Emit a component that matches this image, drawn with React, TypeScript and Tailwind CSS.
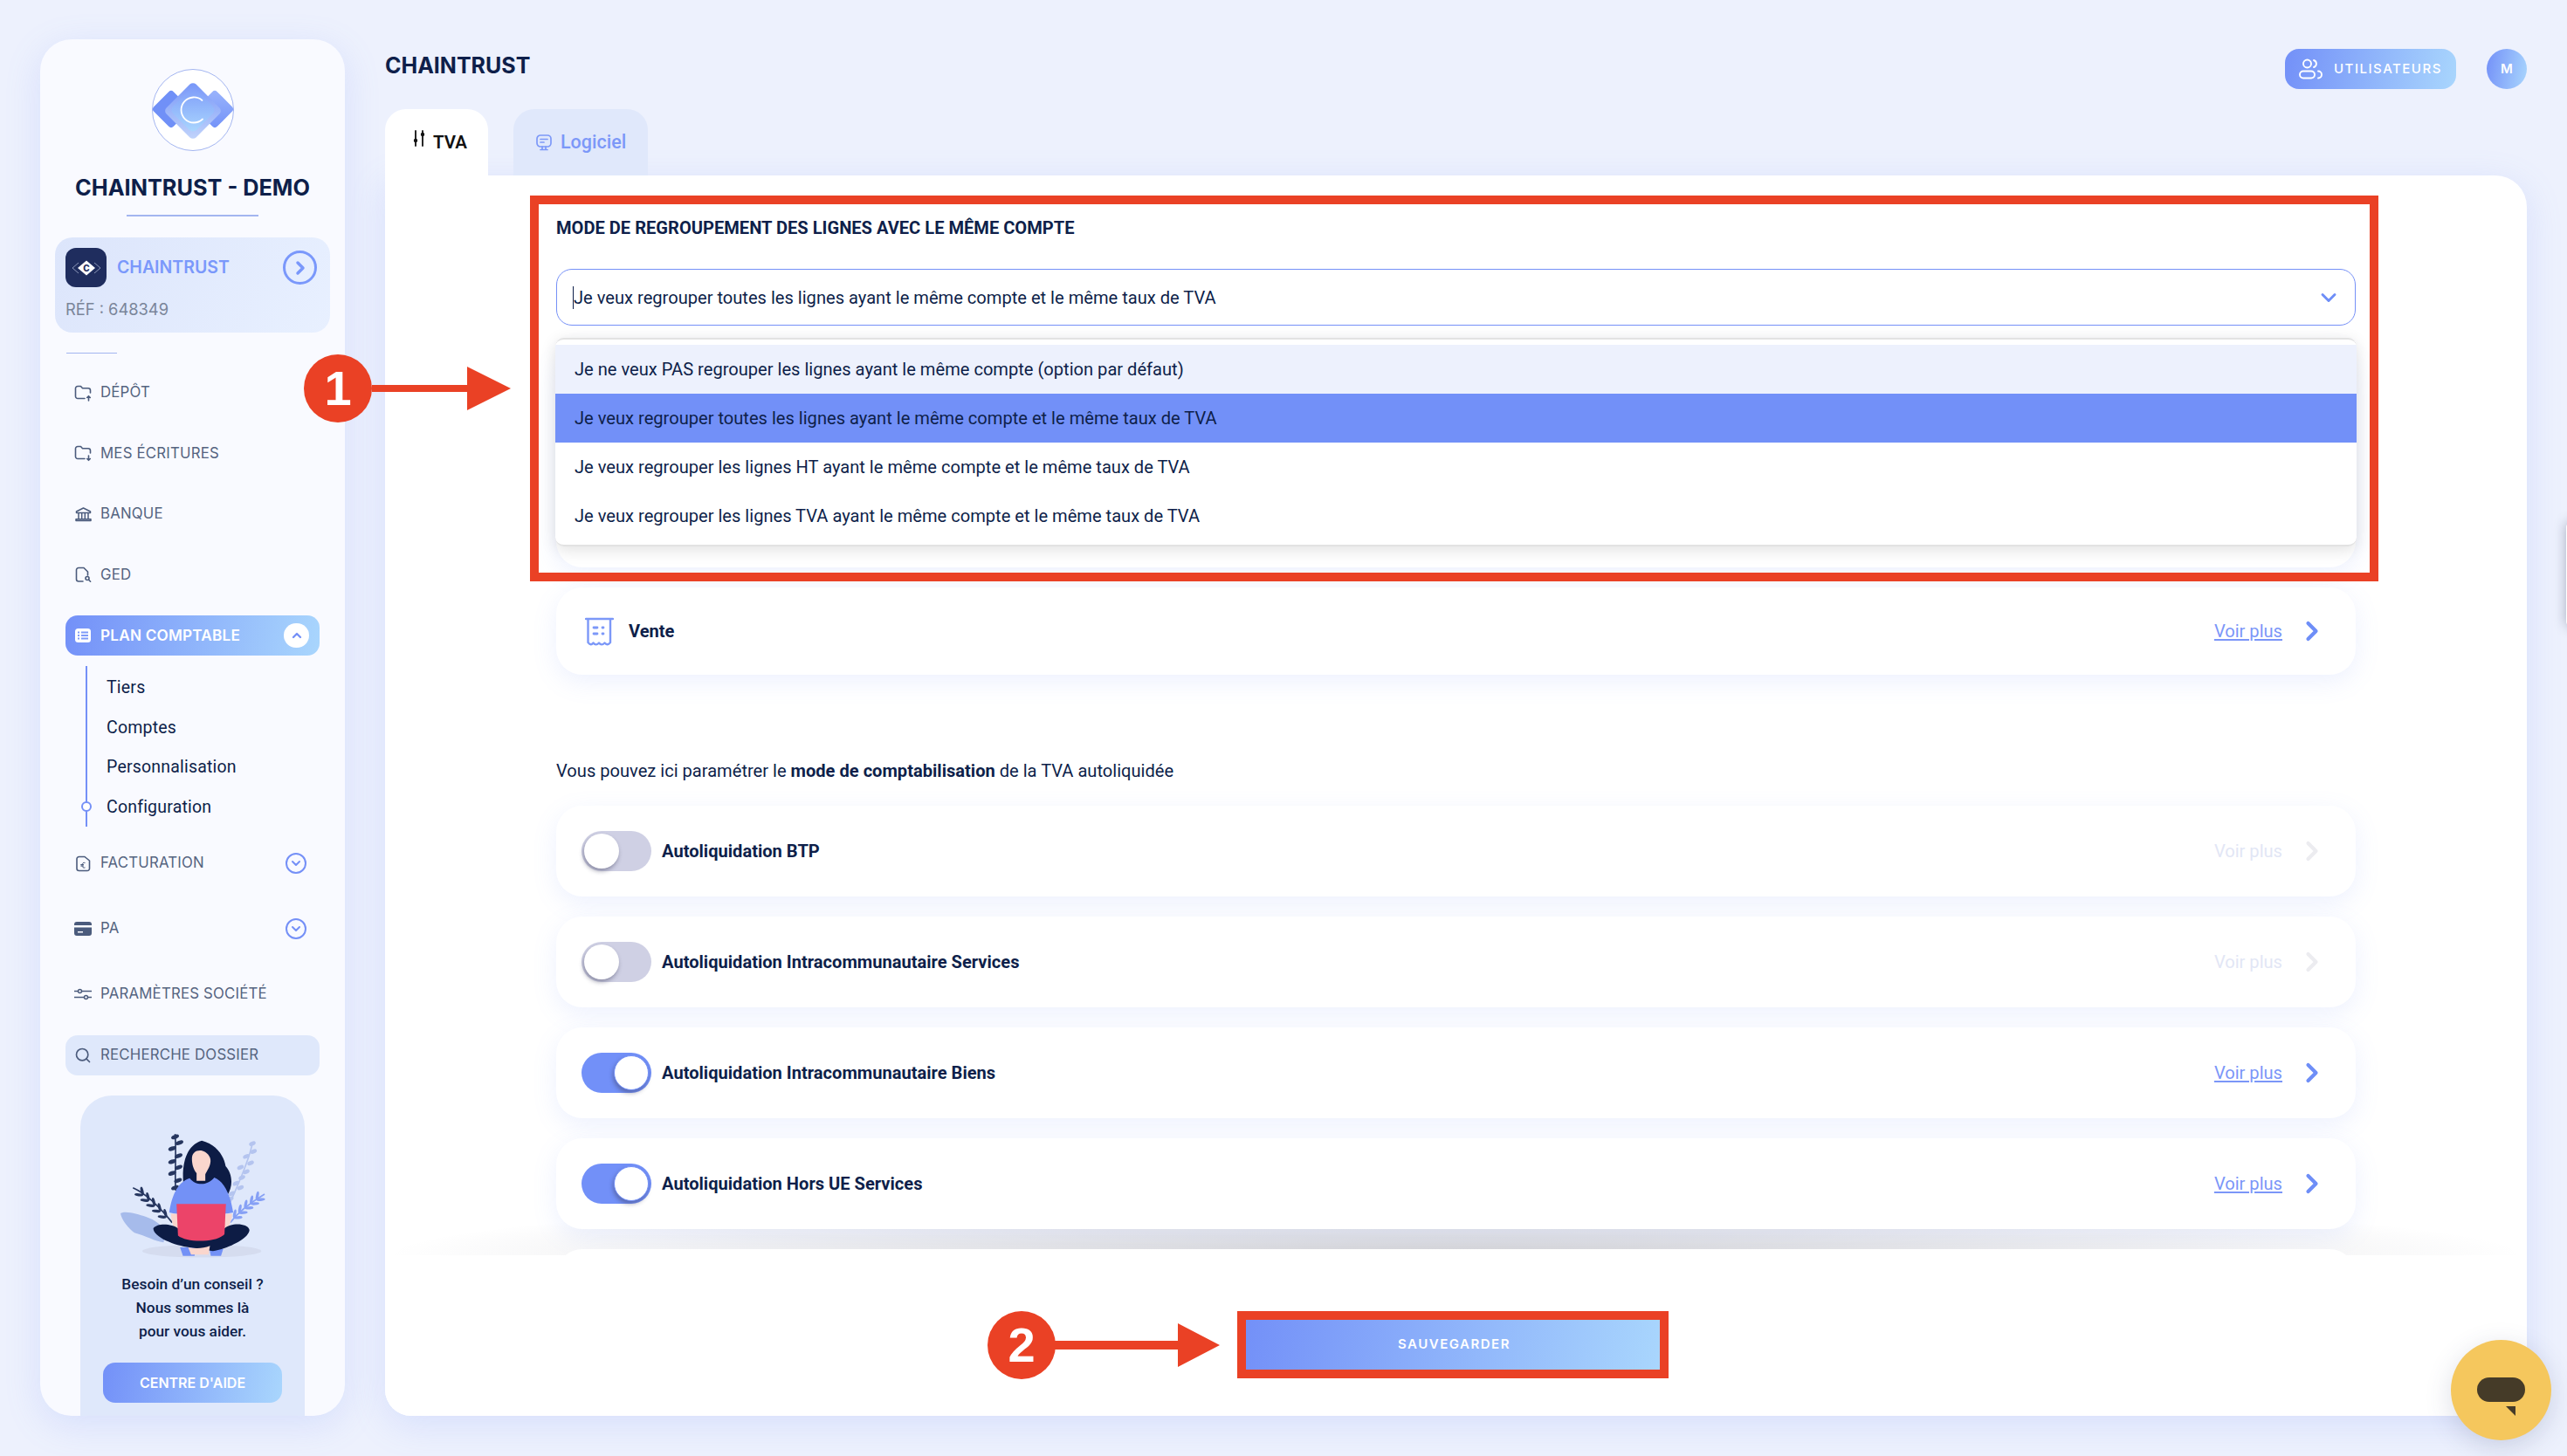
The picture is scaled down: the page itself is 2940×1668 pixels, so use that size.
import { ChevronDown, ChevronRight, ChevronUp, Search } from "lucide-react"
import type { ReactNode } from "react"

const gradient = "bg-[linear-gradient(100deg,#7390f8,#a9d6fd)]"
const inter = "font-[Inter,sans-serif]"

function FolderIcon({ dir }: { dir: "up" | "down" }) {
  return (
    <svg width="20" height="19" viewBox="0 0 20 19" fill="none" stroke="#4b5b7c" strokeWidth="1.6" strokeLinecap="round" strokeLinejoin="round">
      <path d="M12 15.5H4a2.5 2.5 0 0 1-2.500-2.500V4A2.500 2.500 0 0 1 4 1.500h3.500l2 2.200H16A2.500 2.500 0 0 1 18.500 6.200V9" />
      {dir === "up" ? <path d="M16.500 18v-5M14.700 14.500l1.800-1.800 1.800 1.800" /> : <path d="M16.500 12v5M14.700 15.500l1.800 1.800 1.800-1.800" />}
    </svg>
  )
}

function BankIcon() {
  return (
    <svg width="19" height="17" viewBox="0 0 19 17" fill="none" stroke="#4b5b7c" strokeWidth="1.500" strokeLinejoin="round">
      <path d="M1.500 5 9.500 1l8 4v1.500h-16zM1 15.500h17v-1.800H1zM4 7v6M7.700 7v6M11.300 7v6M15 7v6" />
    </svg>
  )
}

function GedIcon() {
  return (
    <svg width="19" height="19" viewBox="0 0 19 19" fill="none" stroke="#4b5b7c" strokeWidth="1.600" strokeLinecap="round" strokeLinejoin="round">
      <path d="M9 17H4a2.500 2.500 0 0 1-2.500-2.500V4A2.500 2.500 0 0 1 4 1.500h6l4.500 4.500v4" />
      <circle cx="14" cy="13.500" r="2" />
      <path d="m15.600 15.200 2 2" />
    </svg>
  )
}

function PlanIcon() {
  return (
    <svg width="18" height="16" viewBox="0 0 18 16">
      <rect width="18" height="16" rx="3.500" fill="#fff" />
      <g fill="#7f9bf9">
        <rect x="3" y="3.500" width="2" height="2" />
        <rect x="3" y="7" width="2" height="2" />
        <rect x="3" y="10.500" width="2" height="2" />
        <rect x="7" y="3.500" width="8" height="2" />
        <rect x="7" y="7" width="8" height="2" />
        <rect x="7" y="10.500" width="8" height="2" />
      </g>
    </svg>
  )
}

function InvoiceIcon() {
  return (
    <svg width="17" height="19" viewBox="0 0 17 19" fill="none" stroke="#4b5b7c" strokeWidth="1.600" strokeLinejoin="round">
      <path d="M3.500 1.500h6.500l5.500 4.500v9A2.500 2.500 0 0 1 13 17.500H3.500A2.500 2.500 0 0 1 1 15V4a2.500 2.500 0 0 1 2.500-2.500z" />
      <path d="M10.500 8.500c-2-.8-3.500.5-3.500 2.700s1.500 3.500 3.500 2.700M5.300 10.500h3.700M5.300 12h3.700" strokeWidth="1" />
    </svg>
  )
}

function CardIcon() {
  return (
    <svg width="20" height="16" viewBox="0 0 20 16">
      <path d="M0 3a3 3 0 0 1 3-3h14a3 3 0 0 1 3 3v1H0zM0 6.500h20V13a3 3 0 0 1-3 3H3a3 3 0 0 1-3-3zm4 4.500v1.500h6V11z" fill="#4b5b7c" fillRule="evenodd" />
    </svg>
  )
}

function SlidersIcon() {
  return (
    <svg width="20" height="14" viewBox="0 0 20 14" fill="none" stroke="#4b5b7c" strokeWidth="1.500">
      <path d="M0 3.500h4.500M8.500 3.500H20M0 10.500h11.500M15.500 10.500H20" />
      <circle cx="6.500" cy="3.500" r="2" />
      <circle cx="13.500" cy="10.500" r="2" />
    </svg>
  )
}

function Logo() {
  return (
    <svg width="94" height="94" viewBox="0 0 94 94">
      <defs>
        <linearGradient id="logoRight" x1="0" y1="0" x2="1" y2="1">
          <stop offset="0" stopColor="#9ab4fc" />
          <stop offset="1" stopColor="#7392f8" />
        </linearGradient>
        <linearGradient id="logoTop" x1="0" y1="0" x2="1" y2="1">
          <stop offset="0" stopColor="#7595f8" />
          <stop offset="1" stopColor="#c3d5fb" />
        </linearGradient>
        <linearGradient id="logoMid" x1="0" y1="0" x2="1" y2="1">
          <stop offset="0" stopColor="#7e9cf9" />
          <stop offset="1" stopColor="#abd8fe" />
        </linearGradient>
      </defs>
      <circle cx="47" cy="47" r="46.500" fill="#fff" stroke="#a3b5f0" strokeWidth="1" />
      <rect x="6" y="30" width="32" height="32" rx="4" fill="#7090f7" transform="rotate(45 22 46)" />
      <rect x="56" y="30" width="32" height="32" rx="4" fill="url(#logoRight)" transform="rotate(45 72 46)" />
      <rect x="23" y="24" width="48" height="48" rx="5" fill="url(#logoTop)" transform="rotate(45 47 48)" />
      <rect x="28" y="28" width="38" height="38" rx="6" fill="url(#logoMid)" transform="rotate(45 47 47)" />
      <path d="M57.500 36a14.500 14.500 0 1 0 .5 21.500" fill="none" stroke="#fff" strokeWidth="1.800" strokeLinecap="round" />
    </svg>
  )
}

function CompanyMark() {
  return (
    <div className="flex h-[45px] w-[47px] shrink-0 items-center justify-center rounded-[12px] bg-[#1f2d5e]">
      <svg width="36" height="24" viewBox="0 0 36 24">
        <path d="M9 6 2 12l7 6M27 6l7 6-7 6" fill="none" stroke="#8b96b8" strokeWidth="1" />
        <path d="M18 3.500 28 12l-10 8.500L8 12z" fill="#fff" />
        <text x="18" y="15.500" textAnchor="middle" fontSize="10" fontWeight="800" fill="#1f2d5e" fontFamily="Inter, sans-serif">C</text>
      </svg>
    </div>
  )
}

const leavesDark = [
  [600, 365], [615, 385], [590, 405], [612, 430], [590, 450], [612, 470], [590, 490], [610, 515], [600, 540],
]
const leavesLight = [
  [866, 388], [870, 415], [845, 432], [860, 455], [825, 470], [845, 485], [830, 505], [810, 525], [825, 540], [795, 560], [790, 578],
]
const leavesLeft = [
  [490, 566], [510, 585], [530, 603], [550, 622], [570, 642],
]
const leavesBlue = [
  [880, 582], [860, 596], [840, 611], [820, 627], [802, 644],
]

function Illustration() {
  return (
    <svg className="shrink-0" width="173" height="150" viewBox="400 340 520 450">
      <ellipse cx="692" cy="758" rx="205" ry="22" fill="#d5dcef" />
      <path d="M412 628c18-10 58 2 88 12 30 10 60 30 70 60l-10 28c-30-3-60-23-100-33-20-15-45-45-48-67z" fill="#a6bbeb" />

      <path d="M866 388C850 460 820 520 790 590" fill="none" stroke="#b4c4ef" strokeWidth="5" />
      {leavesLight.map(([x, y]) => (
        <ellipse key={`${x}-${y}`} cx={x} cy={y} rx="12" ry="7" fill="#b4c4ef" transform={`rotate(-25 ${x} ${y})`} />
      ))}
      <path d="M908 562C870 585 820 620 790 660" fill="none" stroke="#86a0f5" strokeWidth="5" />
      {leavesBlue.map(([x, y]) => (
        <g key={`${x}-${y}`} fill="#86a0f5">
          <ellipse cx={x + 15} cy={y} rx="15" ry="5" transform={`rotate(-78 ${x} ${y})`} />
          <ellipse cx={x + 15} cy={y} rx="15" ry="5" transform={`rotate(-5 ${x} ${y})`} />
        </g>
      ))}
      <path d="M600 355C605 420 598 490 602 550" fill="none" stroke="#26365f" strokeWidth="5" />
      {leavesDark.map(([x, y]) => (
        <ellipse key={`${x}-${y}`} cx={x} cy={y} rx="14" ry="7" fill="#26365f" transform={`rotate(-20 ${x} ${y})`} />
      ))}
      <path d="M455 540C500 560 550 610 590 660" fill="none" stroke="#26365f" strokeWidth="5" />
      {leavesLeft.map(([x, y]) => (
        <g key={`${x}-${y}`} fill="#26365f">
          <ellipse cx={x - 15} cy={y} rx="15" ry="5" transform={`rotate(6 ${x} ${y})`} />
          <ellipse cx={x - 15} cy={y} rx="15" ry="5" transform={`rotate(76 ${x} ${y})`} />
        </g>
      ))}

      <path d="M628 520c-4-60 8-125 64-142 48 12 76 50 82 88 22 24 28 66 6 100z" fill="#0d1c45" />
      <path d="M658 440c0-20 14-30 32-28 20 4 34 22 32 38-2 20-14 34-18 44v22h-30v-26c-10-12-16-30-16-50z" fill="#fad6cd" />
      <path d="M580 625c8-55 28-105 70-118 20 26 60 28 85-2 36 14 56 64 65 120l-20 4-180 1z" fill="#7391f6" />
      <path d="M586 630h20l12 50-16 10c-10-18-16-40-16-60zM776 630h20c0 20-8 40-18 54l-12-8z" fill="#fad6cd" />
      <path d="M617 745h55l-5 30h-40zM718 750h48l-8 25h-35z" fill="#7391f6" />
      <path d="M525 680c15-20 65-15 85 0h160c20-20 80-20 86 5-1 30-76 65-126 73l-80-13c-50-5-125-35-125-65z" fill="#0d1c45" />
      <path d="M645 745c25 5 50 5 75-5l-5 30h-60z" fill="#fad6cd" />
      <path d="M605 596h170l-5 104c-30 30-130 30-160 5z" fill="#ec4469" />
    </svg>
  )
}

function CircleChevron({ up }: { up?: boolean }) {
  return (
    <span className="flex h-[24px] w-[24px] items-center justify-center rounded-full border-2 border-[#7590f7]">
      {up ? <ChevronUp className="h-4 w-4 text-[#7590f7]" strokeWidth={3} /> : <ChevronDown className="h-4 w-4 text-[#7590f7]" strokeWidth={3} />}
    </span>
  )
}

function NavItem({ icon, label, trailing }: { icon: ReactNode; label: string; trailing?: ReactNode }) {
  return (
    <div className="flex h-[46px] shrink-0 items-center pl-[10px] pr-[15px]">
      <span className="flex w-[20px] justify-center">{icon}</span>
      <span className={`ml-[10px] flex-1 text-[16.800px] tracking-[0.2px] text-[#55647f] ${inter}`}>{label}</span>
      {trailing}
    </div>
  )
}

function Sidebar() {
  return (
    <aside className="mt-[45px] ml-[46px] flex h-[1577px] w-[349px] shrink-0 flex-col overflow-hidden rounded-[36px] bg-[#f9faff] shadow-[0_10px_40px_rgba(116,144,248,0.18)]">
      <div className="mt-[34px] flex shrink-0 justify-center">
        <Logo />
      </div>
      <h1 className={`mt-[23px] shrink-0 text-center text-[25.300px] leading-[38px] font-bold text-[#0e1f4a] ${inter}`}>CHAINTRUST - DEMO</h1>
      <div className="mx-auto mt-[12px] h-[2px] w-[151px] shrink-0 bg-[#a3b5f0]" />
      <div className="mx-[17px] mt-[24px] h-[109px] shrink-0 rounded-[20px] bg-[linear-gradient(120deg,#dce5fb,#e8f0ff)] px-[12px] pt-[12px]">
        <div className="flex items-center">
          <CompanyMark />
          <span className={`ml-[12px] flex-1 text-[19.500px] font-semibold text-[#7a98fb] ${inter}`}>CHAINTRUST</span>
          <span className="mr-[3px] flex h-[39px] w-[39px] items-center justify-center rounded-full border-[3px] border-[#7a98fb]">
            <ChevronRight className="h-6 w-6 text-[#7a98fb]" strokeWidth={3.500} />
          </span>
        </div>
        <div className={`mt-[12px] text-[18.300px] leading-[26px] text-[#7a8599] ${inter}`}>RÉF : 648349</div>
      </div>
      <div className="mt-[23px] ml-[30px] h-px w-[58px] shrink-0 bg-[#a3b5f0]" />

      <nav className="mt-[22px] flex shrink-0 flex-col px-[29px]">
        <div className="flex flex-col gap-[23.500px]">
          <NavItem icon={<FolderIcon dir="up" />} label="DÉPÔT" />
          <NavItem icon={<FolderIcon dir="down" />} label="MES ÉCRITURES" />
          <NavItem icon={<BankIcon />} label="BANQUE" />
          <NavItem icon={<GedIcon />} label="GED" />
          <div className={`flex h-[46px] items-center rounded-[14px] pl-[10px] pr-[12px] ${gradient}`}>
            <span className="flex w-[20px] justify-center">
              <PlanIcon />
            </span>
            <span className={`ml-[10px] flex-1 text-[17.200px] font-semibold tracking-[0.2px] text-white ${inter}`}>PLAN COMPTABLE</span>
            <span className="flex h-[28px] w-[29px] items-center justify-center rounded-full bg-white">
              <ChevronUp className="h-4 w-4 text-[#7590f7]" strokeWidth={3.500} />
            </span>
          </div>
        </div>

        <div className="relative mt-[12px] h-[184px] pt-[2px] pl-[47px] text-[19.500px] tracking-[0.2px] text-[#0e1f4a]">
          <div className="absolute top-0 left-[23px] h-full w-[1.500px] bg-[#7590f7]" />
          <div className="absolute top-[155px] left-[18px] h-[12px] w-[12px] rounded-full border-2 border-[#7590f7] bg-white" />
          {["Tiers", "Comptes", "Personnalisation", "Configuration"].map((name) => (
            <div key={name} className="flex h-[45.500px] items-center">
              {name}
            </div>
          ))}
        </div>

        <div className="mt-[19px] flex flex-col gap-[29px]">
          <NavItem icon={<InvoiceIcon />} label="FACTURATION" trailing={<CircleChevron />} />
          <NavItem icon={<CardIcon />} label="PA" trailing={<CircleChevron />} />
          <NavItem icon={<SlidersIcon />} label="PARAMÈTRES SOCIÉTÉ" />
        </div>

        <div className="mt-[24px] flex h-[46px] items-center rounded-[14px] bg-[#dfe8fb] pl-[10px]">
          <span className="flex w-[20px] justify-center">
            <Search className="h-5 w-5 text-[#4b5b7c]" strokeWidth={2} />
          </span>
          <span className={`ml-[10px] text-[16.800px] tracking-[0.2px] text-[#55647f] ${inter}`}>RECHERCHE DOSSIER</span>
        </div>
      </nav>

      <div className="mx-[46px] mt-[23px] flex h-[400px] shrink-0 flex-col items-center rounded-t-[36px] bg-[#dfe8fb] pt-[39px]">
        <Illustration />
        <div className="mt-[14px] text-center text-[17.300px] leading-[27px] font-medium text-[#0e1f4a]">
          <p>Besoin d’un conseil ?</p>
          <p>Nous sommes là</p>
          <p>pour vous aider.</p>
        </div>
        <button className={`mt-[22px] h-[46px] w-[205px] shrink-0 rounded-[14px] text-[16px] font-semibold text-white ${gradient} ${inter}`}>CENTRE D'AIDE</button>
      </div>
    </aside>
  )
}

function VoirPlus({ disabled }: { disabled?: boolean }) {
  return (
    <div className="flex items-center">
      <span className={disabled ? "text-[20.100px] text-[#e2e6f5]" : "text-[20.100px] text-[#7b96f8] underline underline-offset-2"}>Voir plus</span>
      <ChevronRight className={disabled ? "ml-[16px] h-[36px] w-[36px] text-[#ececf0]" : "ml-[16px] h-[36px] w-[36px] text-[#6e8ef7]"} strokeWidth={2.800} />
    </div>
  )
}

function Toggle({ on }: { on?: boolean }) {
  return (
    <span className={on ? "relative block h-[46px] w-[80px] rounded-full bg-[#7290f8]" : "relative block h-[46px] w-[80px] rounded-full bg-[#cfd0e4]"}>
      <span
        className={
          on
            ? "absolute top-[3px] right-[3px] h-[40px] w-[40px] rounded-full border border-[#7290f8] bg-white shadow-[-1px_3px_5px_rgba(60,60,90,0.45)]"
            : "absolute top-[3px] left-[3px] h-[40px] w-[40px] rounded-full bg-white shadow-[-1px_3px_5px_rgba(60,60,90,0.45)]"
        }
      />
    </span>
  )
}

const cardShadow = "shadow-[0_8px_28px_rgba(116,144,248,0.13)]"

function ToggleCard({ label, on }: { label: string; on?: boolean }) {
  return (
    <div className={`relative z-10 flex h-[104px] shrink-0 items-center justify-between rounded-[30px] bg-white pr-[32px] pl-[29px] ${cardShadow}`}>
      <div className="flex items-center">
        <Toggle on={on} />
        <span className="ml-[12px] text-[20.100px] font-bold text-[#0e1f4a]">{label}</span>
      </div>
      <VoirPlus disabled={!on} />
    </div>
  )
}

function ReceiptIcon() {
  return (
    <svg width="33" height="33" viewBox="0 0 33 33" fill="none" stroke="#7c98f8" strokeWidth="2.400" strokeLinecap="round" strokeLinejoin="round">
      <path d="M1 2h31M3.500 2v27c2.500 3 4 3 6 .5 2 2.500 4 2.500 6.500 0 2 2.500 4 2.500 6.500 0 2.500 2.500 4 2.500 6.500-.5V2" />
      <path d="M10 12h4M20 12h1M10 19h4M20 19h1" strokeWidth="2.800" />
    </svg>
  )
}

const options = [
  "Je ne veux PAS regrouper les lignes ayant le même compte (option par défaut)",
  "Je veux regrouper toutes les lignes ayant le même compte et le même taux de TVA",
  "Je veux regrouper les lignes HT ayant le même compte et le même taux de TVA",
  "Je veux regrouper les lignes TVA ayant le même compte et le même taux de TVA",
]

function Panel() {
  return (
    <section className="flex h-[1421px] flex-col overflow-hidden rounded-r-[36px] rounded-bl-[30px] bg-white shadow-[0_10px_40px_rgba(116,144,248,0.18)]">
      <div className="relative flex h-[1237px] shrink-0 flex-col overflow-hidden px-[196px] pt-[46px]">
        {/* ombre du pied de page derrière les cartes */}
        <div className="absolute right-0 bottom-0 left-0 h-[70px] bg-[radial-gradient(ellipse_50%_100%_at_50%_100%,rgba(30,30,50,0.2),transparent)]" />
        <h2 className="text-[20.100px] leading-[28px] font-bold text-[#0e1f4a]">MODE DE REGROUPEMENT DES LIGNES AVEC LE MÊME COMPTE</h2>

        <div className="relative z-20 mt-[33px] shrink-0">
          <div className="flex h-[65px] items-center justify-between rounded-[18px] border-[1.500px] border-[#7590f7] bg-white pr-[16px] pl-[18px]">
            <span className="border-l border-[#0e1f4a] text-[20.100px] leading-[26px] text-[#0e1f4a]">Je veux regrouper toutes les lignes ayant le même compte et le même taux de TVA</span>
            <ChevronDown className="h-7 w-7 text-[#6e8ef7]" strokeWidth={2.500} />
          </div>
          <div className="absolute top-[79px] right-[-1px] left-[-1px] h-[239px] overflow-hidden rounded-[10px] border-y-2 border-[#e2e2e2] bg-white pt-[6px] shadow-[0_4px_18px_rgba(0,0,0,0.12)]">
            {options.map((text, i) => (
              <div
                key={text}
                className={
                  i === 0
                    ? "flex h-[56px] items-center bg-[#edf1fd] pl-[22px] text-[20.100px] text-[#0e1f4a]"
                    : i === 1
                      ? "flex h-[56px] items-center bg-[#7290f8] pl-[22px] text-[20.100px] text-[#0e1f4a]"
                      : "flex h-[56px] items-center pl-[22px] text-[20.100px] text-[#0e1f4a]"
                }
              >
                {text}
              </div>
            ))}
          </div>
        </div>

        <div className={`mt-[23px] h-[254px] shrink-0 rounded-[30px] bg-white ${cardShadow}`} />

        <div className={`mt-[23px] flex h-[100px] shrink-0 items-center justify-between rounded-[30px] bg-white pr-[32px] pl-[33px] ${cardShadow}`}>
          <div className="flex items-center">
            <ReceiptIcon />
            <span className="ml-[17px] text-[20.100px] font-bold text-[#0e1f4a]">Vente</span>
          </div>
          <VoirPlus />
        </div>

        <p className="mt-[95px] text-[20.100px] leading-[30px] text-[#0e1f4a]">
          Vous pouvez ici paramétrer le <strong className="font-bold">mode de comptabilisation</strong> de la TVA autoliquidée
        </p>

        <div className="mt-[25px] flex flex-col gap-[23px]">
          <ToggleCard label="Autoliquidation BTP" />
          <ToggleCard label="Autoliquidation Intracommunautaire Services" />
          <ToggleCard label="Autoliquidation Intracommunautaire Biens" on />
          <ToggleCard label="Autoliquidation Hors UE Services" on />
          <div className="relative z-10 h-[104px] shrink-0 rounded-[30px] bg-white" />
        </div>
      </div>

      <div className="relative z-10 flex flex-1 items-start justify-center bg-white pt-[74px] pr-[7px]">
        <button className={`h-[57px] w-[476px] pl-[3px] text-[15px] font-semibold tracking-[1.500px] text-white ${gradient} ${inter}`}>SAUVEGARDER</button>
      </div>
    </section>
  )
}

function Main() {
  return (
    <main className="ml-[46px] w-[2453px] shrink-0">
      <header className="flex h-[125px] items-start justify-between">
        <h1 className={`mt-[60px] text-[25px] leading-[30px] font-bold text-[#0e1f4a] ${inter}`}>CHAINTRUST</h1>
        <div className="mt-[56px] flex items-center gap-[35px]">
          <button className={`flex h-[46px] w-[196px] items-center rounded-[16px] pl-[16px] ${gradient}`}>
            <svg width="28" height="24" viewBox="0 0 28 24" fill="none" stroke="#fff" strokeWidth="1.900" strokeLinecap="round">
              <circle cx="9.500" cy="6" r="4.500" />
              <path d="M17 2a4.200 4.200 0 0 1 0 8" />
              <rect x="1" y="14.500" width="17" height="8" rx="4" />
              <path d="M22 14.500a4 4 0 0 1 0 8" />
            </svg>
            <span className={`ml-[12px] text-[15px] font-medium tracking-[1.500px] text-white ${inter}`}>UTILISATEURS</span>
          </button>
          <span className={`flex h-[46px] w-[46px] items-center justify-center rounded-full text-[15px] font-semibold text-white ${gradient} ${inter}`}>M</span>
        </div>
      </header>

      <div className="flex h-[76px] items-stretch">
        <div className="flex w-[118px] items-start rounded-t-[24px] bg-white pt-[24px] pl-[31px]">
          <svg width="16" height="19" viewBox="0 0 16 19" fill="none" stroke="#111" strokeWidth="1.800" strokeLinecap="round">
            <path d="M4 1v17M12 1v17" />
            <circle cx="4" cy="12" r="2.200" fill="#111" stroke="none" />
            <circle cx="12" cy="5" r="2.200" fill="#111" stroke="none" />
          </svg>
          <span className="ml-[8px] text-[20.500px] leading-[28px] font-semibold text-[#111]">TVA</span>
        </div>
        <div className="ml-[29px] flex w-[154px] items-start rounded-t-[24px] bg-[#e0e8fb] pt-[24px] pl-[26px]">
          <svg className="mt-[5px]" width="18" height="19" viewBox="0 0 18 19" fill="none" stroke="#7c98f8" strokeWidth="1.700" strokeLinecap="round">
            <rect x="1" y="1" width="16" height="13" rx="4" />
            <path d="M5 5.500h8M5 9h4M7 14v3.500M11 14v3.500M5 17.500h8" />
          </svg>
          <span className="ml-[10px] text-[21.500px] leading-[28px] font-medium text-[#7c98f8]">Logiciel</span>
        </div>
      </div>

      <Panel />
    </main>
  )
}

function Annotations() {
  return (
    <div className="pointer-events-none absolute inset-0 z-30">
      <div className="absolute top-[224px] left-[607px] h-[442px] w-[2117px] border-[10px] border-[#ea4125]" />
      <div className="absolute top-[1502px] left-[1417px] h-[77px] w-[494px] border-[10px] border-[#ea4125]" />

      <div className="absolute top-[406px] left-[348px] flex h-[78px] w-[78px] items-center justify-center rounded-full bg-[#ea4125] font-['Liberation_Sans',sans-serif] text-[56px] font-bold text-white">1</div>
      <svg className="absolute top-[420px] left-[426px]" width="160" height="50" viewBox="0 0 160 50">
        <path d="M0 21h109V0l50 25-50 25V29H0z" fill="#ea4125" />
      </svg>

      <div className="absolute top-[1502px] left-[1131px] flex h-[78px] w-[78px] items-center justify-center rounded-full bg-[#ea4125] font-['Liberation_Sans',sans-serif] text-[56px] font-bold text-white">2</div>
      <svg className="absolute top-[1516px] left-[1208px]" width="190" height="50" viewBox="0 0 190 50">
        <path d="M0 20h141V0l48 25-48 25V30H0z" fill="#ea4125" />
      </svg>

      <div className="absolute top-[598px] left-[2939px] h-[120px] w-[12px] rounded-l-[6px] bg-white shadow-[0_0_14px_rgba(50,60,90,0.4)]" />

      <div className="absolute top-[1535px] left-[2807px] flex h-[115px] w-[115px] items-center justify-center rounded-full bg-[#f5c75d] shadow-[0_8px_30px_rgba(60,70,110,0.18)]">
        <div className="relative h-[28px] w-[55px] -translate-y-[1px] rounded-full bg-[#453b28]">
          <svg className="absolute top-[33px] left-[33px]" width="11" height="11" viewBox="0 0 11 11">
            <path d="M0 0h11v11z" fill="#453b28" />
          </svg>
        </div>
      </div>
    </div>
  )
}

export default function App() {
  return (
    <div className="relative flex h-[1668px] w-[2940px] overflow-hidden bg-[#edf1fd] font-[Roboto,sans-serif]">
      <Sidebar />
      <Main />
      <Annotations />
    </div>
  )
}
